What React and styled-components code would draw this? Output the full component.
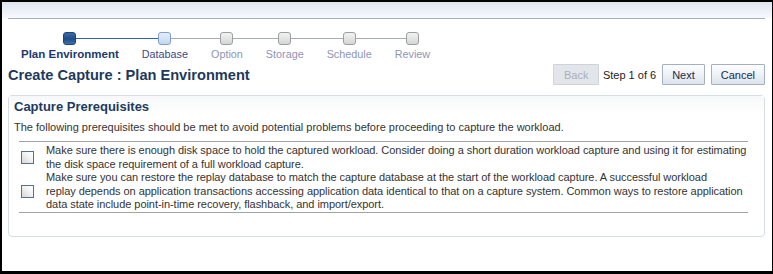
import React from 'react'
import styled, { createGlobalStyle } from 'styled-components'

const GlobalStyle = createGlobalStyle`
	html, body {
		margin: 0;
		padding: 0;
		background: #000;
	}
	body {
		font-family: "Liberation Sans", Arial, sans-serif;
		font-size: 11px;
		color: #333;
	}
`

const Frame = styled.div`
	margin: 2px 1px 3px 2px;
	height: 269px;
	background: #fff;
	overflow: hidden;
`

const TopBand = styled.div`
	height: 16px;
	background: linear-gradient(180deg, #dde4ef 0%, #eef2f8 60%, #f7f9fc 100%);
`

const Rule = styled.div`
	margin: 0 7px 0 6px;
	border-top: 1px solid #a6afbf;
`

const Train = styled.div`
	display: flex;
	padding-left: 7.5px;
	margin-top: 13px;
`

const Step = styled.div`
	display: flex;
	flex-direction: column;
	align-items: center;
`

const Track = styled.div`
	display: flex;
	align-items: center;
	width: 100%;
	height: 13px;
`

const Seg = styled.div`
	flex: 1;
	height: 1px;
	background: ${p => (p.$hidden ? 'transparent' : p.$done ? '#2f5fbf' : '#a2adbc')};
`

const squareStyles = {
	current: `
		border: 1px solid #1d4477;
		background: linear-gradient(180deg, #3a6aa6 0%, #204c86 55%, #3f70ad 100%);
	`,
	visited: `
		border: 1px solid #7d9fd3;
		background: linear-gradient(180deg, #e4eefb 0%, #c3d7f3 100%);
	`,
	pending: `
		border: 1px solid #9a9fa6;
		background: linear-gradient(180deg, #f2f2f2 0%, #d6d6d4 100%);
	`,
}

const Square = styled.div`
	width: 11px;
	height: 11px;
	border-radius: 3px;
	flex: none;
	${p => squareStyles[p.$state]}
`

const labelColors = {
	current: '#1b3a6b',
	visited: '#3b4a86',
	pending: '#8c95b8',
}

const StepLabel = styled.div`
	margin-top: 2px;
	padding: 0 11.5px;
	font-size: ${p => (p.$state === 'current' ? '11.5px' : '10.8px')};
	line-height: 14px;
	white-space: nowrap;
	font-weight: ${p => (p.$state === 'current' ? 'bold' : 'normal')};
	color: ${p => labelColors[p.$state]};
`

const TitleRow = styled.div`
	display: flex;
	align-items: center;
	justify-content: space-between;
	height: 21px;
	margin: 3px 7px 0 6px;
`

const Title = styled.h1`
	margin: 0;
	font-size: 14.6px;
	font-weight: bold;
	color: #1d3a5c;
`

const Actions = styled.div`
	display: flex;
	align-items: center;
`

const Button = styled.button`
	height: 21px;
	padding: 0 ${p => p.$pad || 8}px;
	margin-left: ${p => p.$gap || 0}px;
	font-family: inherit;
	font-size: 11px;
	border-radius: 1px;
	border: 1px solid ${p => (p.disabled ? '#cdd3da' : '#a3afc2')};
	color: ${p => (p.disabled ? '#a9b0b8' : '#1b2b47')};
	background: ${p =>
		p.disabled
			? '#e2e6eb'
			: 'linear-gradient(180deg, #fdfdfe 0%, #eef2f7 50%, #dde3ec 100%)'};
`

const StepCount = styled.span`
	margin: 0 6px 0 4px;
	font-size: 11px;
	color: #222;
`

const Panel = styled.section`
	margin: 10px 7px 0 6px;
	height: 140px;
	border: 1px solid #d6dee4;
	border-radius: 4px;
`

const PanelHeader = styled.h2`
	margin: 0;
	padding: 4px 5px 0;
	height: 14px;
	font-size: 13px;
	line-height: 14px;
	font-weight: bold;
	color: #1d3a5c;
	background: linear-gradient(180deg, #f6f8f9 0%, #fff 100%);
`

const Intro = styled.p`
	margin: 6px 0 0 5px;
	line-height: 14px;
`

const Checklist = styled.div`
	margin: 7px 16px 0 10px;
	padding-top: 2px;
	border-top: 1px solid #a3a3a3;
	border-bottom: 1px solid #a3a3a3;
`

const Item = styled.label`
	display: flex;
	align-items: center;
`

const Box = styled.span`
	flex: none;
	width: 11px;
	height: 11px;
	margin-left: 2px;
	border: 1px solid #56718c;
	background: linear-gradient(45deg, #d6d6d6 0%, #f4f4f4 60%, #fff 100%);
`

const ItemText = styled.span`
	margin-left: 12px;
	line-height: 13.5px;
	white-space: nowrap;
	letter-spacing: -0.05px;
	color: #333;
`

const steps = [
	{ name: 'Plan Environment', state: 'current' },
	{ name: 'Database', state: 'visited' },
	{ name: 'Option', state: 'pending' },
	{ name: 'Storage', state: 'pending' },
	{ name: 'Schedule', state: 'pending' },
	{ name: 'Review', state: 'pending' },
]

const items = [
	[
		'Make sure there is enough disk space to hold the captured workload. Consider doing a short duration workload capture and using it for estimating',
		'the disk space requirement of a full workload capture.',
	],
	[
		'Make sure you can restore the replay database to match the capture database at the start of the workload capture. A successful workload',
		'replay depends on application transactions accessing application data identical to that on a capture system. Common ways to restore application',
		'data state include point-in-time recovery, flashback, and import/export.',
	],
]

const App = () => {
	return (
		<>
			<GlobalStyle />
			<Frame>
				<TopBand />
				<Rule />
				<Train>
					{steps.map((s, i) => (
						<Step key={s.name}>
							<Track>
								<Seg $hidden={i === 0} $done={i === 1} />
								<Square $state={s.state} />
								<Seg $hidden={i === steps.length - 1} $done={i === 0} />
							</Track>
							<StepLabel $state={s.state}>{s.name}</StepLabel>
						</Step>
					))}
				</Train>
				<TitleRow>
					<Title>Create Capture : Plan Environment</Title>
					<Actions>
						<Button disabled $pad={9.5}>Back</Button>
						<StepCount>Step 1 of 6</StepCount>
						<Button $pad={9}>Next</Button>
						<Button $pad={9} $gap={6}>Cancel</Button>
					</Actions>
				</TitleRow>
				<Panel>
					<PanelHeader>Capture Prerequisites</PanelHeader>
					<Intro>
						The following prerequisites should be met to avoid potential problems before proceeding to capture the workload.
					</Intro>
					<Checklist>
						{items.map((lines, i) => (
							<Item key={i}>
								<Box />
								<ItemText>
									{lines.map((l, j) => (
										<React.Fragment key={j}>
											{l}
											{j < lines.length - 1 && <br />}
										</React.Fragment>
									))}
								</ItemText>
							</Item>
						))}
					</Checklist>
				</Panel>
			</Frame>
		</>
	)
}

export default App
